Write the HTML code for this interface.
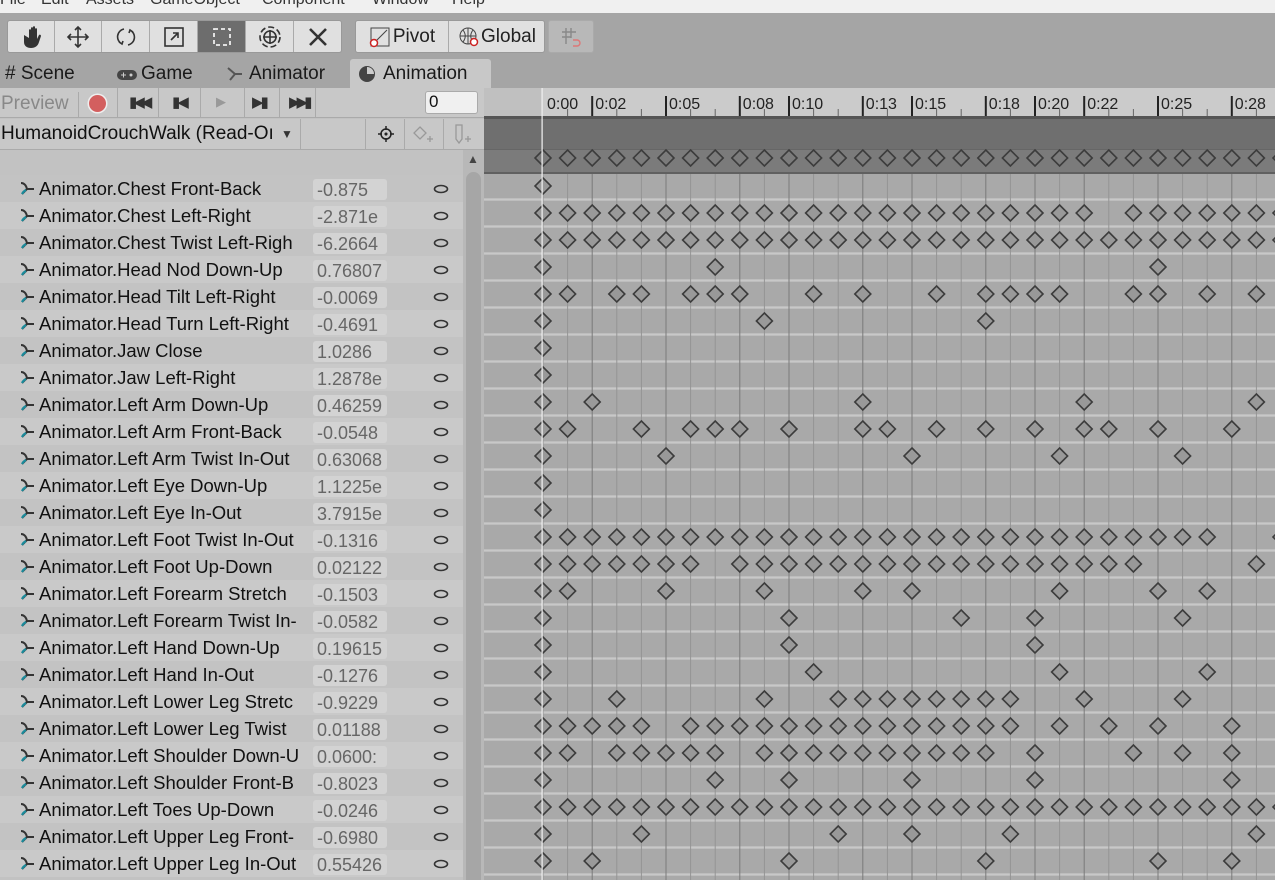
<!DOCTYPE html>
<html><head><meta charset="utf-8"><style>
*{box-sizing:border-box;margin:0;padding:0}
body{width:1275px;height:880px;overflow:hidden;background:#a5a5a5;font-family:"Liberation Sans","DejaVu Sans",sans-serif;position:relative;color:#111}
.abs{position:absolute}
#menu{left:0;top:0;width:1275px;height:13px;background:#f0f0f0;overflow:hidden}
#menu span{position:absolute;top:-9px;font-size:16px;color:#333}
.tb{top:20px;height:33px;background:#e0e0e0;border:1px solid #999;border-radius:3px}
.btn{position:absolute;top:0;height:31px;border-right:1px solid #aaa;display:flex;align-items:center;justify-content:center;font-size:19px;color:#222}
#tabs span{position:absolute;top:63px;font-size:19px;color:#1a1a1a}
#left{left:0;top:88px;width:484px;height:792px;background:#c2c2c2}
.row{position:absolute;left:0;width:463px;height:27px;font-size:18.5px;white-space:nowrap;overflow:hidden}
.row .n{position:absolute;left:39px;top:3px;width:271px;overflow:hidden}
.row .v{position:absolute;left:313px;top:4px;width:74px;height:21px;background:#d3d3d3;border-radius:3px;color:#666;font-size:18px;padding-left:4px;overflow:hidden;line-height:23px}
.row svg{position:absolute}
</style></head><body>
<div id="menu" class="abs"><span style="left:0">File</span><span style="left:41px">Edit</span><span style="left:86px">Assets</span><span style="left:150px">GameObject</span><span style="left:262px">Component</span><span style="left:372px">Window</span><span style="left:452px">Help</span></div>

<div class="abs tb" style="left:7px;width:335px">
 <div class="btn" style="left:0;width:47px"><svg width="22" height="24" viewBox="0 0 22 24" fill="#333"><path d="M4 10v7c0 4 3 6 7 6s7-2 8-6l2-6c0-1-1-2-2-1l-2 4V4c0-1-2-1-2 0v7V2c0-1-2-1-2 0v9V3c0-1-2-1-2 0v9V5c0-1-2-1-2 0v8z"/></svg></div>
 <div class="btn" style="left:47px;width:47px"><svg width="24" height="24" viewBox="0 0 24 24" fill="none" stroke="#333" stroke-width="1.6"><path d="M12 2v20M2 12h20M9 5l3-3 3 3M9 19l3 3 3-3M5 9l-3 3 3 3M19 9l3 3-3 3"/></svg></div>
 <div class="btn" style="left:94px;width:48px"><svg width="24" height="24" viewBox="0 0 24 24" fill="none" stroke="#333" stroke-width="1.6"><path d="M10 4a8 8 0 0 0-2 15M14 20a8 8 0 0 0 2-15M5 17l3 2 1-3M19 7l-3-2-1 3"/></svg></div>
 <div class="btn" style="left:142px;width:48px"><svg width="22" height="22" viewBox="0 0 22 22" fill="none" stroke="#333" stroke-width="1.6"><rect x="2" y="2" width="18" height="18"/><path d="M8 14l7-7M10 7h5v5"/></svg></div>
 <div class="btn" style="left:190px;width:48px;background:#6d6d6d"><svg width="24" height="24" viewBox="0 0 24 24" fill="none" stroke="#eee" stroke-width="1.8"><rect x="4" y="4" width="16" height="16" stroke-dasharray="4 3"/></svg></div>
 <div class="btn" style="left:238px;width:48px"><svg width="26" height="26" viewBox="0 0 26 26" fill="none" stroke="#333" stroke-width="1.6"><circle cx="13" cy="13" r="10" stroke-dasharray="6 3"/><circle cx="13" cy="13" r="6"/><path d="M13 6v14M6 13h14"/></svg></div>
 <div class="btn" style="left:286px;width:47px;border:none"><svg width="24" height="24" viewBox="0 0 24 24" fill="none" stroke="#333" stroke-width="2.6"><path d="M4 20L20 4M4 4l16 16"/></svg></div>
</div>
<div class="abs tb" style="left:355px;width:190px">
 <div class="btn" style="left:0;width:93px;gap:2px"><svg width="22" height="22" viewBox="0 0 22 22" fill="none"><rect x="2" y="2" width="18" height="18" stroke="#444"/><path d="M4 18L18 4" stroke="#444"/><circle cx="5" cy="17" r="3.5" stroke="#c22" stroke-width="1.5" fill="#fff"/></svg>Pivot</div>
 <div class="btn" style="left:93px;width:96px;border:none;gap:1px"><svg width="22" height="22" viewBox="0 0 22 22" fill="none" stroke="#444"><circle cx="10" cy="10" r="8"/><path d="M2 10h16M10 2v16M5 4c3 4 3 8 0 12M15 4c-3 4-3 8 0 12"/><circle cx="16" cy="16" r="3.5" stroke="#c22" stroke-width="1.5" fill="#fff"/></svg>Global</div>
</div>
<div class="abs tb" style="left:548px;width:46px;background:#b8b8b8;border-color:#aaa"><svg style="position:absolute;left:11px;top:5px" width="22" height="22" viewBox="0 0 22 22" fill="none" stroke="#888" stroke-width="1.4"><path d="M6 2v16M11 2v10M2 6h14M2 11h9"/><path d="M13 14h4a3 3 0 0 1 0 6h-4" stroke="#d77"/></svg></div>

<div class="abs" style="left:350px;top:59px;width:141px;height:30px;background:#c8c8c8;border-radius:3px 3px 0 0"></div>
<div id="tabs">
<span style="left:5px"># Scene</span>
<svg class="abs" style="left:116px;top:68px" width="22" height="14"><rect x="1" y="2" width="20" height="10" rx="5" fill="#444"/><circle cx="15" cy="7" r="1.5" fill="#ccc"/><path d="M5 7h5M7.5 4.5v5" stroke="#ccc"/></svg>
<span style="left:141px">Game</span>
<svg class="abs" style="left:226px;top:66px" width="18" height="16"><path d="M2 2l7 6h7M9 8l-5 6" stroke="#555" stroke-width="2" fill="none"/></svg>
<span style="left:249px">Animator</span>
<svg class="abs" style="left:358px;top:65px" width="18" height="18"><circle cx="9" cy="9" r="8" fill="#444"/><path d="M9 9V2A7 7 0 0 1 16 9z" fill="#ccc"/></svg>
<span style="left:383px">Animation</span>
</div>

<div id="left" class="abs">
 <div class="abs" style="left:0;top:0;width:484px;height:30px;background:#c8c8c8;border-bottom:1px solid #aaa"></div>
 <span class="abs" style="left:1px;top:5px;font-size:19px;color:#888">Preview</span>
 <div class="abs" style="left:78px;top:4px;width:1px;height:25px;background:#aaa"></div>
 <div class="abs" style="left:89px;top:7px;width:17px;height:17px;border-radius:50%;background:#d35f5f;box-shadow:0 0 0 1.5px #eee"></div>
 <div class="abs" style="left:117px;top:0;width:1px;height:30px;background:#aaa"></div>
 <span class="abs" style="left:129px;top:5px;font-size:15px;letter-spacing:-4px;color:#333">▮◀◀</span>
 <span class="abs" style="left:172px;top:5px;font-size:15px;letter-spacing:-3px;color:#333">▮◀</span>
 <span class="abs" style="left:216px;top:6px;font-size:13px;color:#999">▶</span>
 <span class="abs" style="left:252px;top:5px;font-size:15px;letter-spacing:-3px;color:#333">▶▮</span>
 <span class="abs" style="left:289px;top:5px;font-size:15px;letter-spacing:-4px;color:#333">▶▶▮</span>
 <div class="abs" style="left:158px;top:0;width:1px;height:30px;background:#aaa"></div>
 <div class="abs" style="left:200px;top:0;width:1px;height:30px;background:#aaa"></div>
 <div class="abs" style="left:244px;top:0;width:1px;height:30px;background:#aaa"></div>
 <div class="abs" style="left:279px;top:0;width:1px;height:30px;background:#aaa"></div>
 <div class="abs" style="left:315px;top:0;width:1px;height:30px;background:#aaa"></div>
 <div class="abs" style="left:425px;top:3px;width:53px;height:23px;background:#f0f0f0;border:1px solid #aaa;border-radius:3px;font-size:17px;padding-left:3px">0</div>
 <div class="abs" style="left:0;top:31px;width:484px;height:31px;background:#c8c8c8;border-bottom:1px solid #aaa"></div>
 <span class="abs" style="left:1px;top:35px;font-size:19px">HumanoidCrouchWalk (Read-Oı</span>
 <span class="abs" style="left:281px;top:39px;font-size:12px;color:#333">▼</span>
 <div class="abs" style="left:300px;top:31px;width:1px;height:31px;background:#aaa"></div>
 <div class="abs" style="left:365px;top:31px;width:1px;height:31px;background:#aaa"></div>
 <div class="abs" style="left:404px;top:31px;width:1px;height:31px;background:#aaa"></div>
 <div class="abs" style="left:443px;top:31px;width:1px;height:31px;background:#aaa"></div>
 <svg class="abs" style="left:377px;top:37px" width="18" height="18" fill="none" stroke="#222" stroke-width="1.5"><circle cx="9" cy="9" r="5"/><path d="M9 1v4M9 13v4M1 9h4M13 9h4"/><circle cx="9" cy="9" r="0.8" fill="#222"/></svg>
 <svg class="abs" style="left:412px;top:37px" width="24" height="20" fill="none" stroke="#999" stroke-width="1.3"><path d="M8 2l6 6-6 6-6-6z"/><path d="M15 14h6M18 11v6"/></svg>
 <svg class="abs" style="left:453px;top:35px" width="22" height="24" fill="none" stroke="#999" stroke-width="1.3"><path d="M3 2h6v14l-3 4-3-4z"/><path d="M12 16h6M15 13v6"/></svg>
 <div class="abs" style="left:463px;top:62px;width:21px;height:730px;background:#b8b8b8"></div>
 <span class="abs" style="left:467px;top:64px;font-size:12px;color:#444">▲</span>
 <div class="abs" style="left:466px;top:84px;width:15px;height:708px;background:#a6a6a6;border-radius:8px 8px 0 0"></div>
 <div id="rows"></div>
</div>

<svg id="tl" class="abs" style="left:484px;top:88px" width="791" height="792"></svg>

<script>
var names=[["Chest Front-Back","-0.875"],["Chest Left-Right","-2.871e"],["Chest Twist Left-Righ","-6.2664"],["Head Nod Down-Up","0.76807"],["Head Tilt Left-Right","-0.0069"],["Head Turn Left-Right","-0.4691"],["Jaw Close","1.0286"],["Jaw Left-Right","1.2878e"],["Left Arm Down-Up","0.46259"],["Left Arm Front-Back","-0.0548"],["Left Arm Twist In-Out","0.63068"],["Left Eye Down-Up","1.1225e"],["Left Eye In-Out","3.7915e"],["Left Foot Twist In-Out","-0.1316"],["Left Foot Up-Down","0.02122"],["Left Forearm Stretch","-0.1503"],["Left Forearm Twist In-","-0.0582"],["Left Hand Down-Up","0.19615"],["Left Hand In-Out","-0.1276"],["Left Lower Leg Stretc","-0.9229"],["Left Lower Leg Twist","0.01188"],["Left Shoulder Down-U","0.0600:"],["Left Shoulder Front-B","-0.8023"],["Left Toes Up-Down","-0.0246"],["Left Upper Leg Front-","-0.6980"],["Left Upper Leg In-Out","0.55426"]];
var h='';
for(var i=0;i<names.length;i++){var t=87+27*i;
h+='<div class="row" style="top:'+t+'px;background:'+(i%2?'#c9c9c9':'#c3c3c3')+'">'+
'<svg style="left:19px;top:6px" width="16" height="16"><path d="M2 2c3 0 5 2 6 6l7 0M8 8l-5 5" stroke="#333" stroke-width="2" fill="none"/><path d="M3 13c1-2 2-3 4-4" stroke="#1a8a9a" stroke-width="2.2" fill="none"/></svg>'+
'<div class="n">Animator.'+names[i][0]+'</div><div class="v">'+names[i][1]+'</div>'+
'<svg style="left:433px;top:9px" width="16" height="10"><ellipse cx="8" cy="5" rx="6.5" ry="3.5" fill="none" stroke="#333" stroke-width="1.6"/></svg></div>';}
document.getElementById('rows').innerHTML=h;

function R(a,b){var r=[];for(var i=a;i<=b;i++)r.push(i);return r}
function ex(arr,rm){return arr.filter(function(x){return rm.indexOf(x)<0})}
var keys=[[0],ex(R(0,30),[23]),R(0,30),[0,7,25],[0,1,3,4,6,7,8,11,13,16,18,19,20,21,24,25,27,29],[0,9,18],[0],[0],[0,2,13,22,29],[0,1,4,6,7,8,10,13,14,16,18,20,22,23,25,28],[0,5,15,21,26],[0],[0],ex(R(0,30),[28,29]),ex(R(0,24),[7]).concat([29]),[0,1,5,9,13,15,21,25,27],[0,10,17,20,26],[0,10,20],[0,11,21,27],[0,3,9,12,13,14,15,16,17,18,19,22,26],[0,1,2,3,4,6,7,8,9,10,11,12,13,14,15,16,17,18,19,21,23,25,28],[0,1,3,4,5,6,7,9,10,11,12,13,14,15,16,17,18,20,24,26,28],[0,7,10,15,20,28],R(0,30),[0,4,12,15,19,29],[0,2,10,18,25,28]];
var X=function(k){return 59+24.6*k};
var s='<rect x="0" y="0" width="791" height="30" fill="#cbcbcb"/><rect x="0" y="0" width="59" height="30" fill="#c0c0c0"/>';
s+='<rect x="0" y="30" width="791" height="31" fill="#6f6f6f"/><rect x="0" y="61" width="791" height="24" fill="#7b7b7b"/><rect x="0" y="28" width="791" height="3" fill="#555"/><rect x="0" y="61" width="791" height="1" fill="#666"/><rect x="0" y="84" width="791" height="2" fill="#606060"/>';
s+='<rect x="0" y="86" width="791" height="706" fill="#a9a9a9"/>';
for(var i=0;i<26;i++){var y=86+27*i;s+='<rect x="0" y="'+(y+24)+'" width="791" height="3" fill="#bdbdbd"/><rect x="0" y="'+(y+25)+'" width="791" height="1" fill="#c8c8c8"/>';}
var labs={0:'0:00',2:'0:02',5:'0:05',8:'0:08',10:'0:10',13:'0:13',15:'0:15',18:'0:18',20:'0:20',22:'0:22',25:'0:25',28:'0:28'};
for(var k=0;k<=31;k++){var x=X(k);var maj=labs[k]&&k>0;
s+='<rect x="'+(x-0.5)+'" y="86" width="1" height="706" fill="'+(maj?'#7a7a7a':'#959595')+'"/>';
if(k>0){if(maj)s+='<rect x="'+(x-1)+'" y="8" width="2" height="20" fill="#222"/>';else s+='<rect x="'+(x-0.5)+'" y="21" width="1" height="7" fill="#666"/>';}
if(labs[k])s+='<text x="'+(x+(k?3:4))+'" y="21" font-size="16" fill="#222" font-family="Liberation Sans,sans-serif">'+labs[k]+'</text>';}
function dia(x,y,f){return '<path d="M'+x+' '+(y-8)+'l8 8-8 8-8-8z" fill="'+f+'" stroke="#3c3c3c" stroke-width="1.6"/>'}
for(var k=0;k<=30;k++)s+=dia(X(k),70,'#7b7b7b');
for(var i=0;i<keys.length;i++){var y=98+27*i;keys[i].forEach(function(k){s+=dia(X(k),y,'#999')});}
s+='<rect x="57.5" y="0" width="1.2" height="792" fill="#f4f4f4"/>';
document.getElementById('tl').innerHTML=s;
</script>
</body></html>
